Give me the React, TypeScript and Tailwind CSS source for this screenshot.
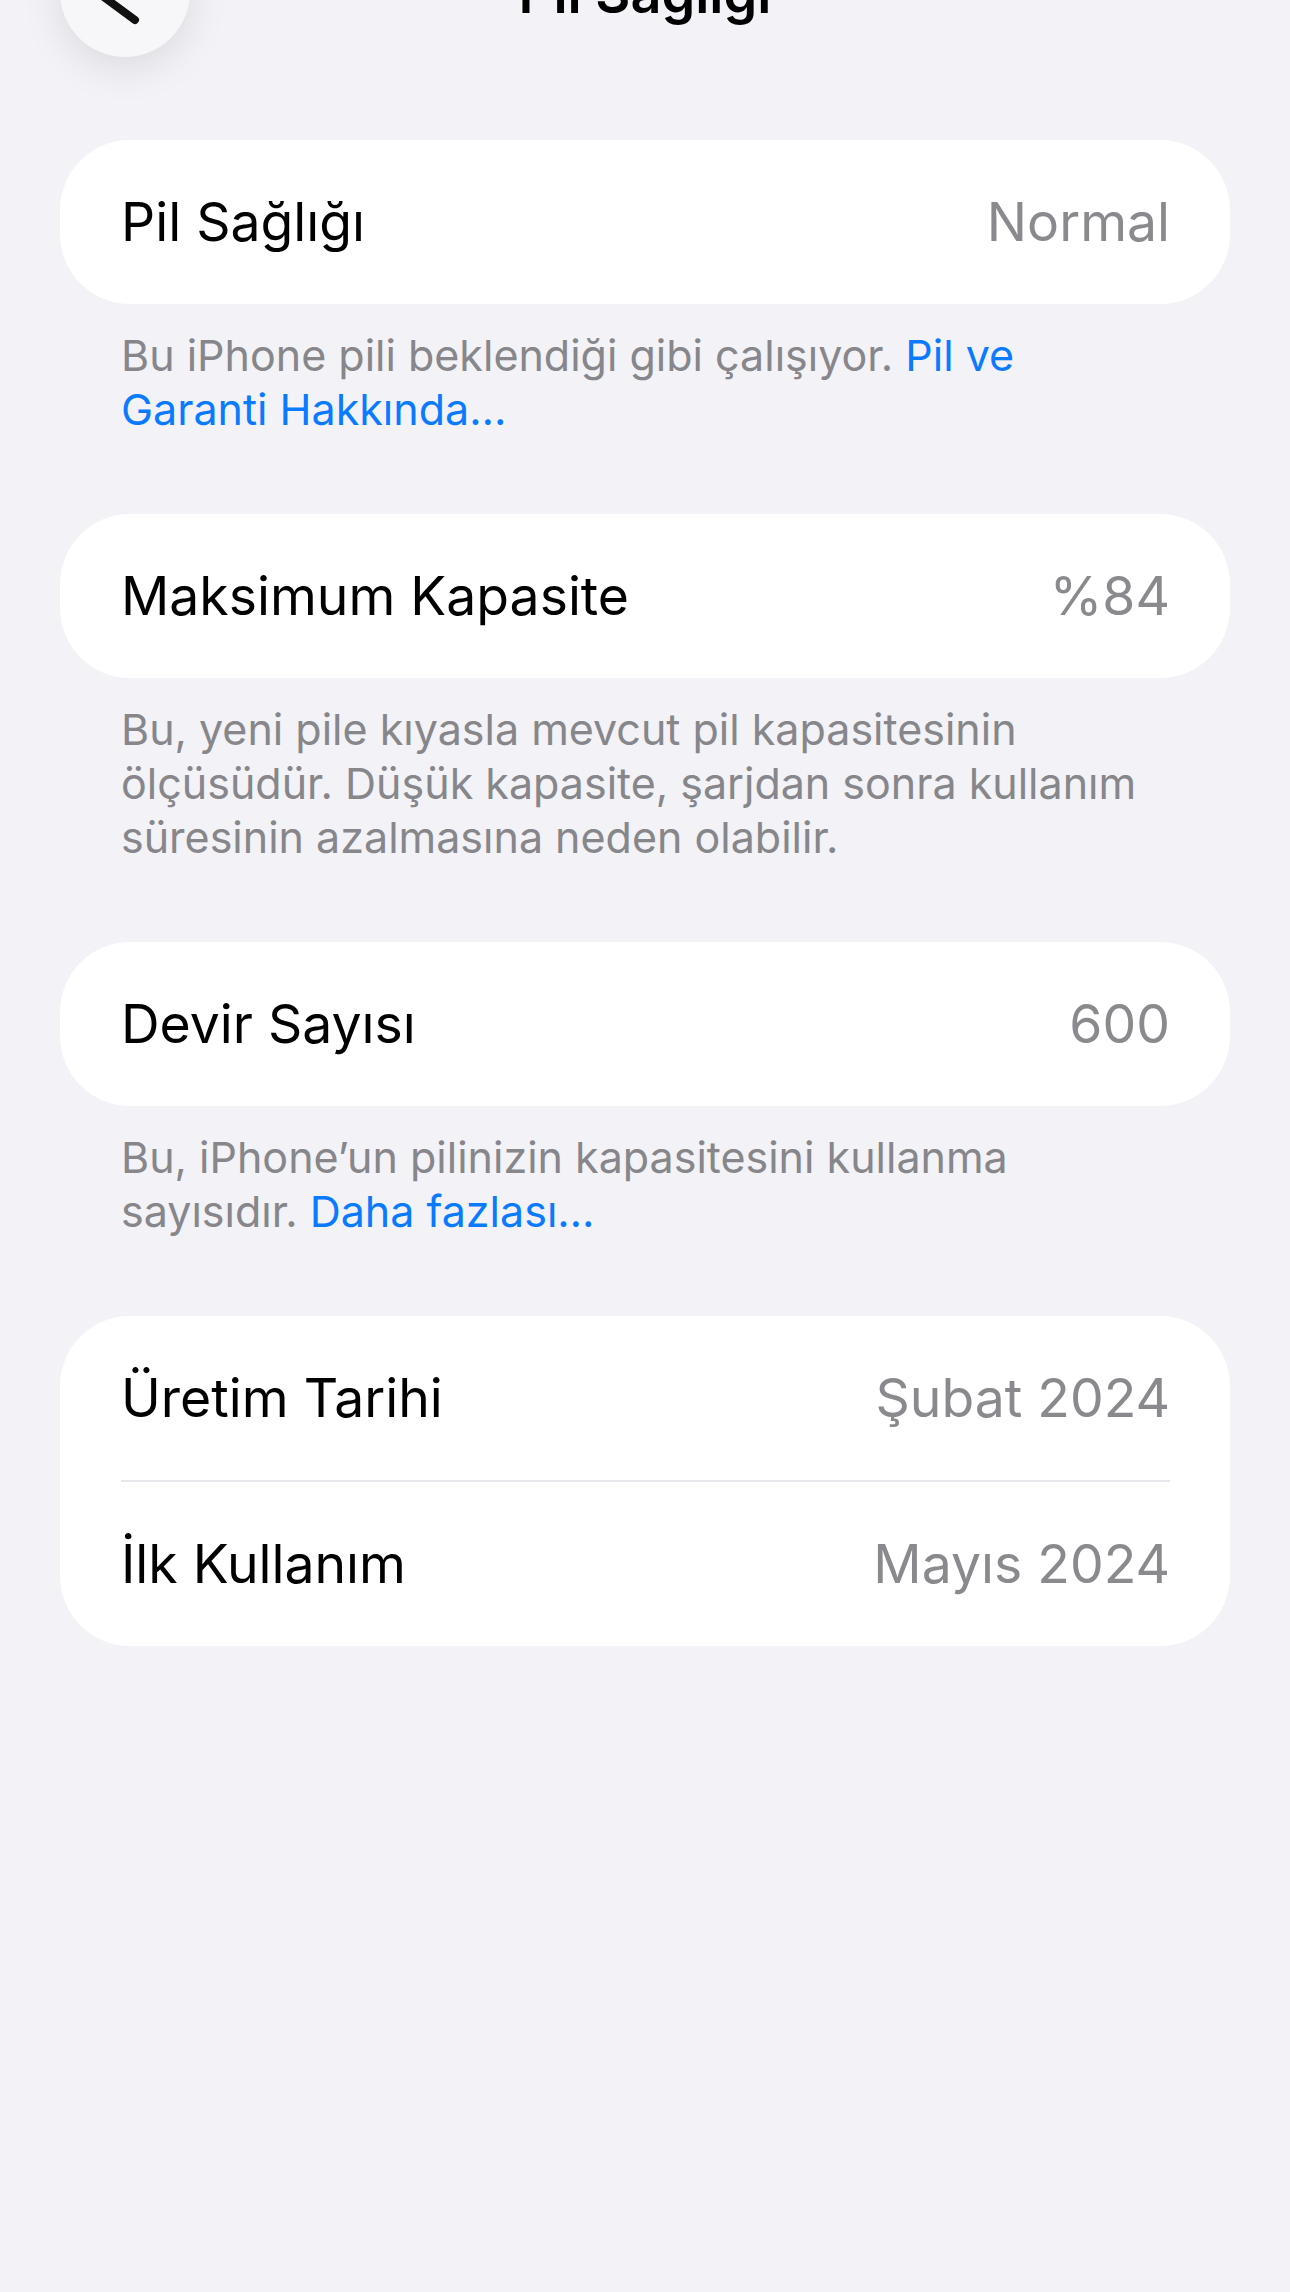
import React from 'react'

type Row = { label: string; value: string }

function Card({ rows }: { rows: Row[] }) {
  return (
    <div className="bg-white rounded-[70px] overflow-hidden">
      {rows.map((r, i) => (
        <div key={r.label}>
          {i > 0 && <div className="ml-[61px] mr-[60px] h-[2px] bg-[#e6e6eb]" />}
          <div className="h-[164px] flex items-center justify-between pl-[61px] pr-[60px]">
            <span className="text-[53.5px] text-black leading-none">{r.label}</span>
            <span className="text-[53.5px] text-[#8a8a8e] leading-none">{r.value}</span>
          </div>
        </div>
      ))}
    </div>
  )
}

function Footer({ children }: { children: React.ReactNode }) {
  return (
    <p className="mt-[24px] px-[61px] text-[43px] leading-[54px] text-[#86868b] whitespace-nowrap">
      {children}
    </p>
  )
}

const link = 'text-[#0a7aff]'

export default function App() {
  return (
    <div
      className="min-h-screen bg-[#f2f2f7] overflow-hidden"
      style={{ fontFamily: 'Inter, "Noto Sans", "Liberation Sans", sans-serif' }}
    >
      {/* nav bar, scrolled so its top is off screen */}
      <div className="-mt-[73px] h-[130px] px-[60px] grid grid-cols-[130px_1fr_130px] items-center">
        <button className="w-[130px] h-[130px] rounded-full bg-[#f7f7f9] shadow-[0_10px_40px_rgba(0,0,0,0.10)] flex items-center justify-center">
          <svg width="130" height="130" viewBox="0 0 130 130" fill="none">
            <path
              d="M75 37 L37 65 L75 93"
              stroke="#111"
              strokeWidth="8"
              strokeLinecap="round"
              strokeLinejoin="round"
            />
          </svg>
        </button>
        <h1 className="mt-[3px] text-center text-[54px] leading-none font-semibold text-black">
          Pil Sağlığı
        </h1>
        <div />
      </div>

      <div className="mt-[83px] px-[60px] flex flex-col gap-[78px]">
        <section>
          <Card rows={[{ label: 'Pil Sağlığı', value: 'Normal' }]} />
          <Footer>
            Bu iPhone pili beklendiği gibi çalışıyor. <span className={link}>Pil ve</span>
            <br />
            <span className={link}>Garanti Hakkında…</span>
          </Footer>
        </section>

        <section>
          <Card rows={[{ label: 'Maksimum Kapasite', value: '%84' }]} />
          <Footer>
            Bu, yeni pile kıyasla mevcut pil kapasitesinin
            <br />
            ölçüsüdür. Düşük kapasite, şarjdan sonra kullanım
            <br />
            süresinin azalmasına neden olabilir.
          </Footer>
        </section>

        <section>
          <Card rows={[{ label: 'Devir Sayısı', value: '600' }]} />
          <Footer>
            Bu, iPhone’un pilinizin kapasitesini kullanma
            <br />
            sayısıdır. <span className={link}>Daha fazlası…</span>
          </Footer>
        </section>

        <section>
          <Card
            rows={[
              { label: 'Üretim Tarihi', value: 'Şubat 2024' },
              { label: 'İlk Kullanım', value: 'Mayıs 2024' },
            ]}
          />
        </section>
      </div>
    </div>
  )
}
